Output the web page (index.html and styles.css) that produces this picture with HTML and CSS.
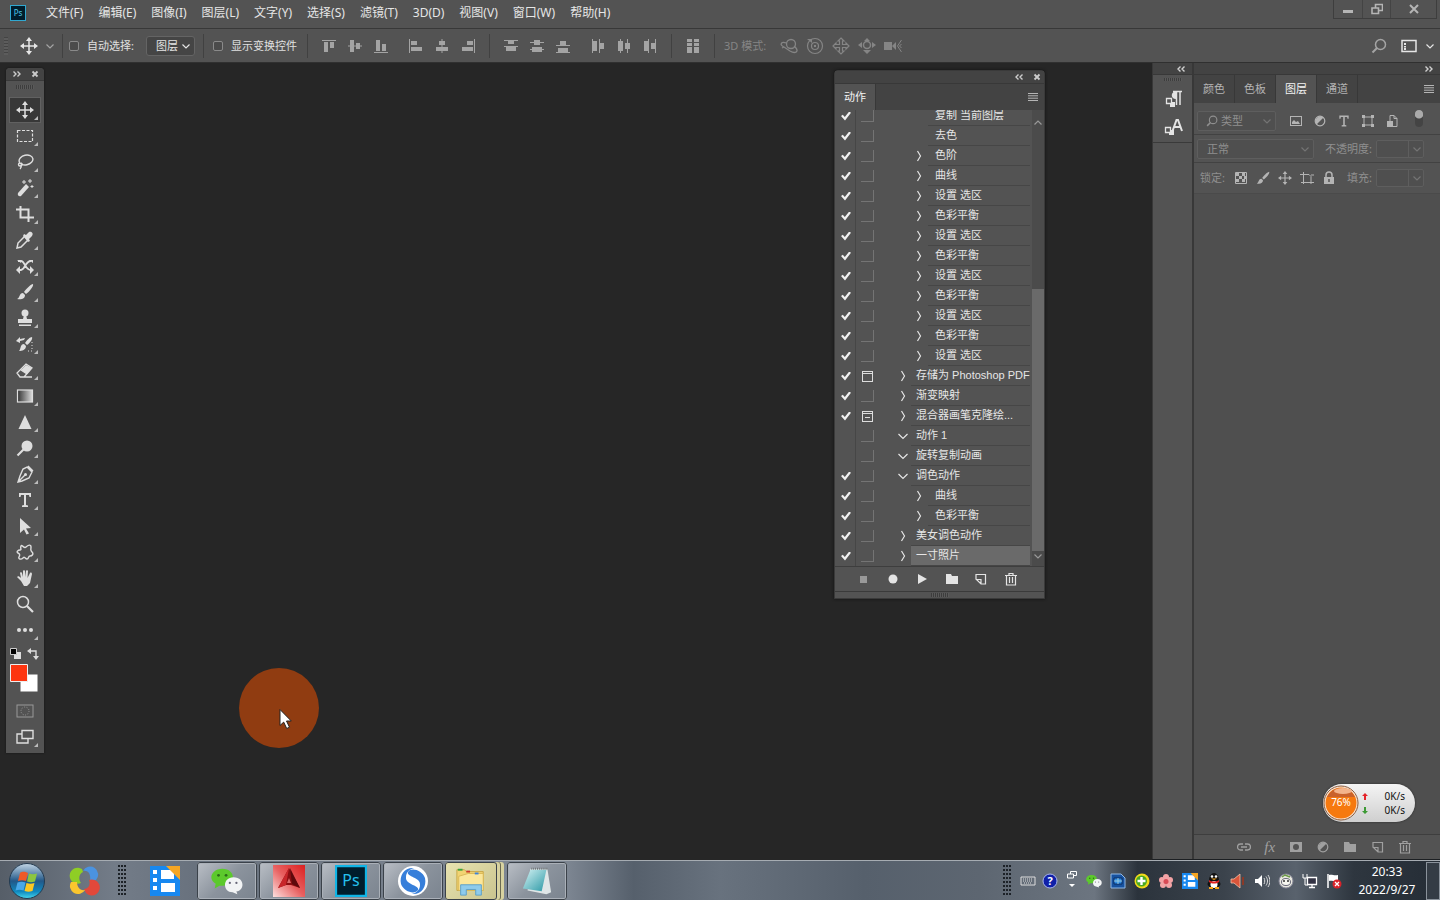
FILE: index.html
```html
<!DOCTYPE html>
<html lang="zh-CN">
<head>
<meta charset="utf-8">
<meta name="viewport" content="width=device-width, initial-scale=1">
<title>Photoshop</title>
<link rel="stylesheet" href="styles.css">
</head>
<body>
<svg class="defs" aria-hidden="true">
  <defs>
    <symbol id="move" viewBox="0 0 18 18"><path d="M9 2v14M2 9h14" stroke="currentColor" stroke-width="1.5"/><path d="M9 0l3 4H6zM9 18l3-4H6zM0 9l4-3v6zM18 9l-4-3v6z" fill="currentColor"/></symbol>
    <symbol id="down" viewBox="0 0 10 10"><path d="M1.500 3.500L5 7l3.500-3.500" fill="none" stroke="currentColor" stroke-width="1.200"/></symbol>
    <symbol id="up" viewBox="0 0 10 10"><path d="M1.500 6.500L5 3l3.500 3.500" fill="none" stroke="currentColor" stroke-width="1.200"/></symbol>
    <symbol id="right" viewBox="0 0 10 12"><path d="M3.500 1L6.500 6l-3 5" fill="none" stroke="currentColor" stroke-width="1.200"/></symbol>
    <symbol id="open" viewBox="0 0 10 12"><path d="M0.500 4L5 8.500 9.500 4" fill="none" stroke="currentColor" stroke-width="1.200"/></symbol>
    <symbol id="dbl-left" viewBox="0 0 8 6"><path d="M3.500 .5L1 3l2.500 2.500M7.500 .5L5 3l2.500 2.500" fill="none" stroke="currentColor" stroke-width="1.400"/></symbol>
    <symbol id="dbl-right" viewBox="0 0 8 6"><path d="M.5 .5L3 3 .5 5.500M4.500 .5L7 3 4.500 5.500" fill="none" stroke="currentColor" stroke-width="1.400"/></symbol>
    <symbol id="close" viewBox="0 0 8 8"><path d="M1.500 1.500l5 5M6.500 1.500l-5 5" stroke="currentColor" stroke-width="1.800"/></symbol>
    <symbol id="menu" viewBox="0 0 10 8"><path d="M0 .5h10M0 2.800h10M0 5.200h10M0 7.500h10" stroke="currentColor"/></symbol>
    <symbol id="search" viewBox="0 0 16 16"><circle cx="9.500" cy="6.500" r="5" fill="none" stroke="currentColor" stroke-width="1.500"/><path d="M6 10l-4.500 4.500" stroke="currentColor" stroke-width="2"/></symbol>
    <symbol id="al-top" viewBox="0 0 18 18"><path d="M2 3.500h14" stroke="currentColor"/><path d="M4 5h4v10H4zM10 5h4v6h-4z" fill="currentColor"/></symbol>
    <symbol id="al-mid" viewBox="0 0 18 18"><path d="M2 9h14" stroke="currentColor"/><path d="M4 3h4v12H4zM10 6h4v6h-4z" fill="currentColor"/></symbol>
    <symbol id="al-bot" viewBox="0 0 18 18"><path d="M2 15.500h14" stroke="currentColor"/><path d="M4 3h4v11H4zM10 7h4v7h-4z" fill="currentColor"/></symbol>
    <symbol id="al-left" viewBox="0 0 18 18"><path d="M2.500 2v14" stroke="currentColor"/><path d="M4 4h6v4H4zM4 10h11v4H4z" fill="currentColor"/></symbol>
    <symbol id="al-cen" viewBox="0 0 18 18"><path d="M9 2v14" stroke="currentColor"/><path d="M6 4h6v4H6zM3 10h12v4H3z" fill="currentColor"/></symbol>
    <symbol id="al-right" viewBox="0 0 18 18"><path d="M15.500 2v14" stroke="currentColor"/><path d="M8 4h6v4H8zM3 10h11v4H3z" fill="currentColor"/></symbol>
    <symbol id="ds-top" viewBox="0 0 18 18"><path d="M2 3.500h14M2 9.500h14" stroke="currentColor"/><path d="M6 4h6v3H6zM4 10h10v4H4z" fill="currentColor"/></symbol>
    <symbol id="ds-mid" viewBox="0 0 18 18"><path d="M2 5.500h14M2 12.500h14" stroke="currentColor"/><path d="M6 3h6v5H6zM4 10h10v5H4z" fill="currentColor"/></symbol>
    <symbol id="ds-bot" viewBox="0 0 18 18"><path d="M2 8.500h14M2 15.500h14" stroke="currentColor"/><path d="M6 4h6v4H6zM4 11h10v4H4z" fill="currentColor"/></symbol>
    <symbol id="grid3" viewBox="0 0 18 18"><path d="M3 2h5v3H3zM3 6h5v10H3zM10 2h5v3h-5zM10 6h5v10h-5z" fill="currentColor"/><path d="M3 9.500h12" stroke="#535353"/></symbol>
    <symbol id="orbit" viewBox="0 0 18 18"><g fill="none" stroke="currentColor" stroke-width="1.300"><circle cx="11" cy="7" r="4.500"/><path d="M6.500 6C1 4-1 8 4 10l6 4c5 3 9 1 6-3l-2-2M4 10l-2 1"/></g></symbol>
    <symbol id="roll" viewBox="0 0 18 18"><g fill="none" stroke="currentColor" stroke-width="1.200"><circle cx="9" cy="9" r="7.500"/><circle cx="9" cy="9" r="3.500"/></g><path d="M1 2h5v4zM8 8h2v2H8z" fill="currentColor"/></symbol>
    <symbol id="pan" viewBox="0 0 18 18"><path d="M9 1l3 3H10.500v3.500H14V6l3 3-3 3v-1.500h-3.500V14H12l-3 3-3-3h1.500v-3.500H4V12L1 9l3-3v1.500h3.500V4H6z" fill="none" stroke="currentColor" stroke-width="1.200"/></symbol>
    <symbol id="slide" viewBox="0 0 18 18"><circle cx="9" cy="8" r="3.500" fill="none" stroke="currentColor" stroke-width="1.500"/><path d="M9 1l3 3H6zM9 17l4-4H5zM0 8l4-3v6zM18 8l-4-3v6z" fill="currentColor"/></symbol>
    <symbol id="camera" viewBox="0 0 18 18"><path d="M0 5h8v8H0zM8 9l4-4v8z" fill="currentColor"/><path d="M17.500 3l-4 6 4 6M17.500 7l-2 2 2 2" fill="none" stroke="currentColor"/></symbol>
    <symbol id="marquee" viewBox="0 0 18 18"><rect x="1.500" y="3.500" width="15" height="11" fill="none" stroke="currentColor" stroke-width="1.200" stroke-dasharray="3 1.500"/></symbol>
    <symbol id="lasso" viewBox="0 0 18 18"><g fill="none" stroke="currentColor" stroke-width="1.400"><ellipse cx="10" cy="7" rx="7" ry="4.800" transform="rotate(-12 10 7)"/><path d="M4 10c-2 0-2 3 0 3s3-2 1-3M5 12c1 2 0 3-1 4"/></g></symbol>
    <symbol id="wand" viewBox="0 0 18 18"><path d="M10 5l3 3-8 9c-2 1-4-1-3-3z" fill="currentColor"/><path d="M8 1v4M6 3h4M14 0v4M12 2h4M16 6v3M14.500 7.500h3" stroke="currentColor"/></symbol>
    <symbol id="crop" viewBox="0 0 18 18"><path d="M0 4.500h12.500V17M4.500 1v11.500H18" fill="none" stroke="currentColor" stroke-width="2"/></symbol>
    <symbol id="dropper" viewBox="0 0 18 18"><path d="M9 5L2 12l-1 5 4-1 7-7" fill="none" stroke="currentColor" stroke-width="1.500"/><path d="M8 3l2 1 3-3c2-1 5 1 3 4l-3 3 1 2-2 1-5-6z" fill="currentColor"/></symbol>
    <symbol id="shuffle" viewBox="0 0 18 18"><path d="M2 4h3c4 0 4 9 10 9M2 13h3c4 0 4-9 10-9" fill="none" stroke="currentColor" stroke-width="1.800"/><path d="M18 13l-4-4v8zM0 13l4-4v8zM13 3h4v3zM1 3h4v3z" fill="currentColor"/></symbol>
    <symbol id="brush" viewBox="0 0 18 18"><path d="M17 1c1 2-4 8-7 10L8 9c2-3 7-8 9-8zM7 10l2 2c0 4-4 5-8 4 3-1 2-6 6-6z" fill="currentColor"/></symbol>
    <symbol id="stamp" viewBox="0 0 18 18"><circle cx="9" cy="4" r="3.500" fill="currentColor"/><path d="M8 6h2l1 4h5v4H2v-4h5zM3 15.500h12V17H3z" fill="currentColor"/></symbol>
    <symbol id="history" viewBox="0 0 18 18"><path d="M16 2c1 2-2 6-5 8L9 8c2-3 5-6 7-6zM8 9l2 2c0 4-4 5-7 5 2-2 1-7 5-7zM0 6l4-4v2l5-1-1 2-4 1v2z" fill="currentColor"/><path d="M16 7v9h-6" fill="none" stroke="currentColor" stroke-dasharray="1 2"/></symbol>
    <symbol id="eraser" viewBox="0 0 18 18"><path d="M10 4l6 3-5 6-6-4z" fill="currentColor"/><path d="M10 3l6 4-8 9H4l-3-4zM5 9l6 4M8 16h8" fill="none" stroke="currentColor" stroke-width="1.300"/></symbol>
    <symbol id="gradient" viewBox="0 0 18 18"><rect x="1.500" y="3" width="15" height="12" fill="url(#gr)" stroke="currentColor" stroke-width="1.200"/></symbol>
    <linearGradient id="gr"><stop stop-color="#333"/><stop offset="1" stop-color="#ddd"/></linearGradient>
    <symbol id="sharpen" viewBox="0 0 18 18"><path d="M9 2l6.500 14h-13z" fill="currentColor"/></symbol>
    <symbol id="dodge" viewBox="0 0 18 18"><circle cx="11" cy="7" r="5.500" fill="currentColor"/><path d="M7.500 10.500l-6 6" stroke="currentColor" stroke-width="2.200"/></symbol>
    <symbol id="pen" viewBox="0 0 18 18"><path d="M11 2l5 5-3 6-7 3-4 1 2-6 3-7zM3 16l6-6M12 1l5 5" fill="none" stroke="currentColor" stroke-width="1.400"/><circle cx="9.500" cy="9.500" r="1.500" fill="currentColor"/></symbol>
    <symbol id="type" viewBox="0 0 18 18"><path d="M3 2h12v4h-1.500L13 4h-3v10l2 .5V16H6v-1.500L8 14V4H5l-.5 2H3z" fill="currentColor"/></symbol>
    <symbol id="arrow" viewBox="0 0 18 18"><path d="M4 1l11 10-5 .5 3 5-2.500 1-2.500-5L4 16z" fill="currentColor"/></symbol>
    <symbol id="blob" viewBox="0 0 18 18"><path d="M5 3c1-2 3 3 5 1s5-3 5 0-1 3 1 5 0 4-2 4-1 3-3 3-2-3-4-1-5 1-4-1 1-3-1-4 0-3 2-3 0-2 1-4z" fill="none" stroke="currentColor" stroke-width="1.400"/></symbol>
    <symbol id="hand" viewBox="0 0 18 18"><path d="M5 12L1 8c1-1 2-1 4 1L4 4c0-1 2-1 2 0l1 4V2c0-1 2-1 2 0v6l1-6c0-1 2-1 2 0l-.5 7L14 4c1-1 2 0 2 1l-2 9-3 3H8z" fill="currentColor"/></symbol>
    <symbol id="zoom" viewBox="0 0 18 18"><circle cx="7" cy="7" r="5.500" fill="none" stroke="currentColor" stroke-width="1.500"/><path d="M11 11l6 6" stroke="currentColor" stroke-width="2.200"/></symbol>
    <symbol id="dots" viewBox="0 0 18 18"><circle cx="3" cy="9" r="2" fill="currentColor"/><circle cx="9" cy="9" r="2" fill="currentColor"/><circle cx="15" cy="9" r="2" fill="currentColor"/></symbol>
    <symbol id="mask" viewBox="0 0 18 18"><rect x="1" y="3" width="16" height="12" fill="none" stroke="currentColor"/><circle cx="9" cy="9" r="4" fill="none" stroke="currentColor" stroke-dasharray="1 1.500"/></symbol>
    <symbol id="screens" viewBox="0 0 18 18"><path d="M6 2.500h11v8H6zM6 6H1v9h11v-4.500" fill="none" stroke="currentColor" stroke-width="1.400"/></symbol>
    <symbol id="picture" viewBox="0 0 14 14"><rect x="1.500" y="2.500" width="11" height="9" fill="none" stroke="currentColor"/><path d="M3 10V8l2-2 2 2 2-1 2 3z" fill="currentColor"/></symbol>
    <symbol id="adjust" viewBox="0 0 14 14"><circle cx="7" cy="7" r="4.800" fill="none" stroke="currentColor" stroke-width="1.200"/><path d="M3.500 10.500l7-7a5 5 0 0 0-7 7z" fill="currentColor"/></symbol>
    <symbol id="shape" viewBox="0 0 14 14"><path d="M3 3h8v8H3z" fill="none" stroke="currentColor"/><path d="M1 1h3v3H1zM10 1h3v3h-3zM1 10h3v3H1zM10 10h3v3h-3z" fill="currentColor"/></symbol>
    <symbol id="smart" viewBox="0 0 14 14"><path d="M5 7V1.500h4l3 3v8H8M9 1.500v3h3" fill="none" stroke="currentColor"/><path d="M2 7h6v6H2z" fill="currentColor"/></symbol>
    <symbol id="checker" viewBox="0 0 14 14"><path d="M1.500 1.500h11v11h-11z" fill="none" stroke="currentColor"/><path d="M2 2h3v3H2zM8 2h3v3H8zM5 5h3v3H5zM10 5h2v3h-2zM2 8h3v3H2zM8 8h3v3H8z" fill="currentColor"/></symbol>
    <symbol id="artboard" viewBox="0 0 14 14"><path d="M3.500 1v12M0 3.500h9l2 2V13M1 11.500h13M11 4h3" fill="none" stroke="currentColor"/></symbol>
    <symbol id="lock" viewBox="0 0 14 14"><path d="M4 6V4a3 3 0 0 1 6 0v2" fill="none" stroke="currentColor" stroke-width="1.500"/><path d="M2 6h10v7H2z" fill="currentColor"/><path d="M7 8v3" stroke="#535353" stroke-width="1.500"/></symbol>
    <symbol id="link" viewBox="0 0 14 14"><path d="M6 10H3.500a3 3 0 0 1 0-6H6M8 4h2.500a3 3 0 0 1 0 6H8M4 7h6" fill="none" stroke="currentColor" stroke-width="1.300"/></symbol>
    <symbol id="maskadd" viewBox="0 0 14 14"><path fill-rule="evenodd" d="M1 2h12v10H1zM7 4a3 3 0 1 0 0 6 3 3 0 0 0 0-6z" fill="currentColor"/></symbol>
    <symbol id="folder" viewBox="0 0 14 14"><path d="M1 2h5l1 2h6v8H1z" fill="currentColor"/></symbol>
    <symbol id="newitem" viewBox="0 0 14 14"><path d="M2 7V2.500h9.500v9.500H7L2.500 7.500H7V12" fill="none" stroke="currentColor" stroke-width="1.200"/></symbol>
    <symbol id="trash" viewBox="0 0 14 14"><path d="M1 3.500h12M5 3V1.500h4V3M2.500 4v9h9V4M5.500 5v6M8.500 5v6" fill="none" stroke="currentColor" stroke-width="1.200"/></symbol>
    <symbol id="para" viewBox="0 0 20 20"><path d="M17 3v13M13.500 3v13M10 2.500h9" stroke="currentColor" stroke-width="1.500"/><path d="M14 2v8c-7 1-7-8 0-8z" fill="currentColor"/><path d="M3.500 9.500h5v5h-5z" fill="none" stroke="currentColor" stroke-width="1.300"/><path d="M8 13h4v5H7v-3h1z" fill="currentColor"/></symbol>
    <symbol id="char" viewBox="0 0 20 20"><path d="M9.500 14l4-11h1.500l4 11M11 10h6.500" fill="none" stroke="currentColor" stroke-width="2"/><path d="M2.500 10.500h5v5h-5z" fill="none" stroke="currentColor" stroke-width="1.300"/><path d="M7 13h4v5H6v-3h1z" fill="currentColor"/></symbol>
    <symbol id="wechat" viewBox="0 0 34 30"><path d="M12 2c15 0 15 18 0 18l-3 0-5 3 1-5C-4 13 1 2 12 2z" fill="#5cc92c"/><path d="M24 11c12 0 12 14 3 15l1 3-5-2c-11 0-11-16 1-16z" fill="#f2f4f5"/><g fill="#2c6b18"><circle cx="8" cy="9" r="1.500"/><circle cx="16" cy="9" r="1.500"/></g><g fill="#667"><circle cx="20" cy="17" r="1.200"/><circle cx="27" cy="17" r="1.200"/></g></symbol>
    <symbol id="bluebox" viewBox="0 0 30 30"><path d="M0 0h30v30H0z" fill="#1788f0"/><path d="M3 4h4v4H3zM3 12h4v4H3zM3 20h4v4H3zM11 4h13v9H11zM11 17h14v9H11z" fill="#fff"/><path d="M16 0h14v14z" fill="#f6a623"/></symbol>
    <linearGradient id="sky" x2="0" y2="1"><stop stop-color="#c2d5e5"/><stop offset=".5" stop-color="#225888"/><stop offset=".8" stop-color="#1089bf"/><stop offset="1" stop-color="#46d7ed"/></linearGradient>
    <linearGradient id="acad" x1="1" y1="0" x2="0" y2="1"><stop stop-color="#dc2020"/><stop offset=".5" stop-color="#e86060"/><stop offset="1" stop-color="#fde0df"/></linearGradient>
    <linearGradient id="note" x2="1" y2="1"><stop stop-color="#d5f3f4"/><stop offset="1" stop-color="#2b98a5"/></linearGradient>
  </defs>
</svg>

<header class="menubar">
  <svg class="ps-logo" viewBox="0 0 16 16" role="img" aria-label="Ps"><rect x=".5" y=".5" width="15" height="15" fill="#001d2c" stroke="#31a8d0"/><text x="8" y="11" text-anchor="middle" font-size="8" fill="#4fc8ea">Ps</text></svg>
  <nav class="menus">
    <button>文件(F)</button><button>编辑(E)</button><button>图像(I)</button><button>图层(L)</button><button>文字(Y)</button><button>选择(S)</button><button>滤镜(T)</button><button>3D(D)</button><button>视图(V)</button><button>窗口(W)</button><button>帮助(H)</button>
  </nav>
  <div class="winbtns">
    <button aria-label="最小化"><svg viewBox="0 0 12 12"><path d="M1 7h10v3H1z" fill="currentColor"/></svg></button>
    <button aria-label="还原"><svg viewBox="0 0 12 12"><path d="M4.500 5V1.500h7v6H8M1 5h6.500v5.500H1z" fill="none" stroke="currentColor" stroke-width="1.600"/></svg></button>
    <button class="wide" aria-label="关闭"><svg viewBox="0 0 12 12"><path d="M2 2l8 8M10 2l-8 8" stroke="currentColor" stroke-width="2"/></svg></button>
  </div>
</header>

<section class="options">
  <div class="opt first"><span class="vgrip"></span><svg class="i18 bright"><use href="#move"/></svg><svg class="i10"><use href="#down"/></svg></div>
  <div class="opt choose"><label><input type="checkbox">自动选择:</label>
    <span class="select auto"><select aria-label="自动选择"><option>图层</option></select><svg class="i10"><use href="#down"/></svg></span></div>
  <div class="opt show"><label><input type="checkbox">显示变换控件</label></div>
  <div class="opt icons"><div class="trio"><button aria-label="顶对齐"><svg class="i18"><use href="#al-top"/></svg></button><button aria-label="垂直居中对齐"><svg class="i18"><use href="#al-mid"/></svg></button><button aria-label="底对齐"><svg class="i18"><use href="#al-bot"/></svg></button></div><div class="trio"><button aria-label="左对齐"><svg class="i18"><use href="#al-left"/></svg></button><button aria-label="水平居中对齐"><svg class="i18"><use href="#al-cen"/></svg></button><button aria-label="右对齐"><svg class="i18"><use href="#al-right"/></svg></button></div></div>
  <div class="opt icons"><div class="trio"><button aria-label="按顶分布"><svg class="i18"><use href="#ds-top"/></svg></button><button aria-label="垂直居中分布"><svg class="i18"><use href="#ds-mid"/></svg></button><button aria-label="按底分布"><svg class="i18"><use href="#ds-bot"/></svg></button></div><div class="trio"><button aria-label="按左分布"><svg class="i18" viewBox="0 0 18 18"><path d="M3.500 2v14M10.500 2v14" stroke="currentColor"/><path d="M4 4h4v10H4zM11 6h4v6h-4z" fill="currentColor"/></svg></button><button aria-label="水平居中分布"><svg class="i18" viewBox="0 0 18 18"><path d="M5.500 2v14M12.500 2v14" stroke="currentColor"/><path d="M3 4h5v10H3zM10 6h5v6h-5z" fill="currentColor"/></svg></button><button aria-label="按右分布"><svg class="i18" viewBox="0 0 18 18"><path d="M7.500 2v14M14.500 2v14" stroke="currentColor"/><path d="M3 4h4v10H3zM10 6h4v6h-4z" fill="currentColor"/></svg></button></div></div>
  <div class="opt icons"><button aria-label="自动对齐图层"><svg class="i18"><use href="#grid3"/></svg></button></div>
  <div class="opt mode"><span>3D 模式:</span><div class="trio"><button aria-label="环绕"><svg class="i18"><use href="#orbit"/></svg></button><button aria-label="滚动"><svg class="i18"><use href="#roll"/></svg></button><button aria-label="平移"><svg class="i18"><use href="#pan"/></svg></button><button aria-label="滑动"><svg class="i18"><use href="#slide"/></svg></button><button aria-label="变焦"><svg class="i18"><use href="#camera"/></svg></button></div></div>
  <div class="opt-end"><button aria-label="搜索"><svg class="i16"><use href="#search"/></svg></button><button class="bright" aria-label="工作区"><svg class="i16" viewBox="0 0 16 14"><path d="M1 1.500h14v11H1z" fill="none" stroke="currentColor" stroke-width="1.500"/><path d="M3 4h2v2H3zM3 7h2v1.500H3zM3 9h2v2H3z" fill="currentColor"/></svg><svg class="i10"><use href="#down"/></svg></button></div>
</section>

<main class="workspace">
  <div class="canvas">
    <aside class="toolbox">
      <div class="tb-head"><svg class="dbl"><use href="#dbl-right"/></svg><svg class="x8"><use href="#close"/></svg></div>
      <span class="hgrip"></span>
      <div class="tools">
        <button class="on" aria-label="移动"><svg class="i18"><use href="#move"/></svg></button>
        <button aria-label="选框"><svg class="i18"><use href="#marquee"/></svg></button>
        <button aria-label="套索"><svg class="i18"><use href="#lasso"/></svg></button>
        <button aria-label="魔棒"><svg class="i18"><use href="#wand"/></svg></button>
        <button aria-label="裁剪"><svg class="i18"><use href="#crop"/></svg></button>
        <button aria-label="吸管"><svg class="i18"><use href="#dropper"/></svg></button>
        <button aria-label="内容感知移动"><svg class="i18"><use href="#shuffle"/></svg></button>
        <button aria-label="画笔"><svg class="i18"><use href="#brush"/></svg></button>
        <button aria-label="仿制图章"><svg class="i18"><use href="#stamp"/></svg></button>
        <button aria-label="历史记录画笔"><svg class="i18"><use href="#history"/></svg></button>
        <button aria-label="橡皮擦"><svg class="i18"><use href="#eraser"/></svg></button>
        <button aria-label="渐变"><svg class="i18"><use href="#gradient"/></svg></button>
        <button aria-label="锐化"><svg class="i18"><use href="#sharpen"/></svg></button>
        <button aria-label="减淡"><svg class="i18"><use href="#dodge"/></svg></button>
        <button aria-label="钢笔"><svg class="i18"><use href="#pen"/></svg></button>
        <button aria-label="文字"><svg class="i18"><use href="#type"/></svg></button>
        <button aria-label="路径选择"><svg class="i18"><use href="#arrow"/></svg></button>
        <button aria-label="自定形状"><svg class="i18"><use href="#blob"/></svg></button>
        <button aria-label="抓手"><svg class="i18"><use href="#hand"/></svg></button>
        <button class="plain" aria-label="缩放"><svg class="i18"><use href="#zoom"/></svg></button>
        <button aria-label="更多"><svg class="i18"><use href="#dots"/></svg></button>
      </div>
      <svg class="colors" viewBox="0 0 32 46"><path d="M5 5h7v7H5z" fill="#ddd"/><path d="M1.500 1.500h6v6h-6z" fill="#000" stroke="#ccc"/><path d="M21 4h6v6" fill="none" stroke="#ddd" stroke-width="1.400"/><path d="M22 1v6l-4-3zM24 9h6l-3 4z" fill="#ddd"/><path d="M11 27h18v18H11z" fill="#fff" stroke="#555"/><path d="M1.500 17.500h17v17h-17z" fill="#fd3510" stroke="#eee"/></svg>
      <div class="tools modes"><button class="plain dim" aria-label="快速蒙版"><svg class="i18"><use href="#mask"/></svg></button><button aria-label="屏幕模式"><svg class="i18"><use href="#screens"/></svg></button></div>
    </aside>

    <svg class="pointer" viewBox="0 0 80 80"><circle cx="40" cy="40" r="40" fill="#903c11"/><path d="M41 41.500v16l3.700-3.400 3 6.400 2.800-1.300-3-6.200h4.800z" fill="#fff" stroke="#222"/></svg>

    <section class="actions">
      <div class="ac-head"><svg class="dbl"><use href="#dbl-left"/></svg><svg class="x8"><use href="#close"/></svg></div>
      <div class="ac-tabs"><button class="tab on">动作</button><button class="pmenu" aria-label="面板菜单"><svg class="mi"><use href="#menu"/></svg></button></div>
      <div class="ac-body">
        <ul class="list">
          <li class="in"><input type="checkbox" checked aria-label="复制 当前图层"><i class="dlg"></i><i class="tw"></i><span>复制 当前图层</span></li>
          <li class="in"><input type="checkbox" checked aria-label="去色"><i class="dlg"></i><i class="tw"></i><span>去色</span></li>
          <li class="in"><input type="checkbox" checked aria-label="色阶"><i class="dlg"></i><button class="tw" aria-label="展开"><svg><use href="#right"/></svg></button><span>色阶</span></li>
          <li class="in"><input type="checkbox" checked aria-label="曲线"><i class="dlg"></i><button class="tw" aria-label="展开"><svg><use href="#right"/></svg></button><span>曲线</span></li>
          <li class="in"><input type="checkbox" checked aria-label="设置 选区"><i class="dlg"></i><button class="tw" aria-label="展开"><svg><use href="#right"/></svg></button><span>设置 选区</span></li>
          <li class="in"><input type="checkbox" checked aria-label="色彩平衡"><i class="dlg"></i><button class="tw" aria-label="展开"><svg><use href="#right"/></svg></button><span>色彩平衡</span></li>
          <li class="in"><input type="checkbox" checked aria-label="设置 选区"><i class="dlg"></i><button class="tw" aria-label="展开"><svg><use href="#right"/></svg></button><span>设置 选区</span></li>
          <li class="in"><input type="checkbox" checked aria-label="色彩平衡"><i class="dlg"></i><button class="tw" aria-label="展开"><svg><use href="#right"/></svg></button><span>色彩平衡</span></li>
          <li class="in"><input type="checkbox" checked aria-label="设置 选区"><i class="dlg"></i><button class="tw" aria-label="展开"><svg><use href="#right"/></svg></button><span>设置 选区</span></li>
          <li class="in"><input type="checkbox" checked aria-label="色彩平衡"><i class="dlg"></i><button class="tw" aria-label="展开"><svg><use href="#right"/></svg></button><span>色彩平衡</span></li>
          <li class="in"><input type="checkbox" checked aria-label="设置 选区"><i class="dlg"></i><button class="tw" aria-label="展开"><svg><use href="#right"/></svg></button><span>设置 选区</span></li>
          <li class="in"><input type="checkbox" checked aria-label="色彩平衡"><i class="dlg"></i><button class="tw" aria-label="展开"><svg><use href="#right"/></svg></button><span>色彩平衡</span></li>
          <li class="in"><input type="checkbox" checked aria-label="设置 选区"><i class="dlg"></i><button class="tw" aria-label="展开"><svg><use href="#right"/></svg></button><span>设置 选区</span></li>
          <li><input type="checkbox" checked aria-label="存储为 Photoshop PDF"><i class="dlg win"></i><button class="tw" aria-label="展开"><svg><use href="#right"/></svg></button><span>存储为 Photoshop PDF</span></li>
          <li><input type="checkbox" checked aria-label="渐变映射"><i class="dlg"></i><button class="tw" aria-label="展开"><svg><use href="#right"/></svg></button><span>渐变映射</span></li>
          <li><input type="checkbox" checked aria-label="混合器画笔克隆绘"><i class="dlg win some"></i><button class="tw" aria-label="展开"><svg><use href="#right"/></svg></button><span>混合器画笔克隆绘...</span></li>
          <li><input type="checkbox" aria-label="动作 1"><i class="dlg"></i><button class="tw" aria-label="折叠"><svg><use href="#open"/></svg></button><span>动作 1</span></li>
          <li><input type="checkbox" aria-label="旋转复制动画"><i class="dlg"></i><button class="tw" aria-label="折叠"><svg><use href="#open"/></svg></button><span>旋转复制动画</span></li>
          <li><input type="checkbox" checked aria-label="调色动作"><i class="dlg"></i><button class="tw" aria-label="折叠"><svg><use href="#open"/></svg></button><span>调色动作</span></li>
          <li class="in"><input type="checkbox" checked aria-label="曲线"><i class="dlg"></i><button class="tw" aria-label="展开"><svg><use href="#right"/></svg></button><span>曲线</span></li>
          <li class="in"><input type="checkbox" checked aria-label="色彩平衡"><i class="dlg"></i><button class="tw" aria-label="展开"><svg><use href="#right"/></svg></button><span>色彩平衡</span></li>
          <li><input type="checkbox" checked aria-label="美女调色动作"><i class="dlg"></i><button class="tw" aria-label="展开"><svg><use href="#right"/></svg></button><span>美女调色动作</span></li>
          <li class="sel"><input type="checkbox" checked aria-label="一寸照片"><i class="dlg"></i><button class="tw" aria-label="展开"><svg><use href="#right"/></svg></button><span>一寸照片</span></li>
        </ul>
        <div class="scroll"><svg class="i10"><use href="#up"/></svg><div class="track"><div class="thumb"></div></div><svg class="i10"><use href="#down"/></svg></div>
      </div>
      <div class="ac-foot">
        <button class="dim" aria-label="停止"><svg class="i14" viewBox="0 0 14 14"><path d="M4 4h7v7H4z" fill="currentColor"/></svg></button>
        <button aria-label="录制"><svg class="i14" viewBox="0 0 14 14"><circle cx="7" cy="7" r="4.500" fill="currentColor"/></svg></button>
        <button aria-label="播放"><svg class="i14" viewBox="0 0 14 14"><path d="M3 2l9 5-9 5z" fill="currentColor"/></svg></button>
        <button aria-label="新建组"><svg class="i14"><use href="#folder"/></svg></button>
        <button aria-label="新建动作"><svg class="i14"><use href="#newitem"/></svg></button>
        <button aria-label="删除"><svg class="i14"><use href="#trash"/></svg></button>
      </div>
      <div class="ac-grip"><span class="hgrip"></span></div>
    </section>
  </div>

  <aside class="dock slim">
    <div class="dock-head"><svg class="dbl"><use href="#dbl-left"/></svg></div>
    <div class="slim-group"><span class="hgrip"></span><button aria-label="段落"><svg class="i20"><use href="#para"/></svg></button><button aria-label="字符"><svg class="i20"><use href="#char"/></svg></button></div>
  </aside>

  <aside class="dock panels">
    <div class="dock-head"><svg class="dbl"><use href="#dbl-right"/></svg></div>
    <div class="tabs"><button class="tab">颜色</button><button class="tab">色板</button><button class="tab on">图层</button><button class="tab">通道</button><button class="pmenu" aria-label="面板菜单"><svg class="mi"><use href="#menu"/></svg></button></div>
    <div class="lrow filter">
      <div class="box kind"><svg class="i12"><use href="#search"/></svg><span class="select"><select aria-label="类型" disabled><option>类型</option></select><svg class="i10"><use href="#down"/></svg></span></div>
      <div class="ficons"><svg class="i14"><use href="#picture"/></svg><svg class="i14"><use href="#adjust"/></svg><svg class="i14"><use href="#type"/></svg><svg class="i14"><use href="#shape"/></svg><svg class="i14"><use href="#smart"/></svg></div>
      <span class="toggle"></span>
    </div>
    <div class="lrow blend">
      <span class="box select mode-sel"><select aria-label="混合模式" disabled><option>正常</option></select><svg class="i10"><use href="#down"/></svg></span>
      <label for="opacity">不透明度:</label><span class="combo"><input id="opacity" disabled><svg class="i10"><use href="#down"/></svg></span>
    </div>
    <div class="lrow locks">
      <span>锁定:</span>
      <div class="ficons"><svg class="i14"><use href="#checker"/></svg><svg class="i14"><use href="#brush"/></svg><svg class="i14"><use href="#move"/></svg><svg class="i14"><use href="#artboard"/></svg><svg class="i14"><use href="#lock"/></svg></div>
      <label for="fill">填充:</label><span class="combo"><input id="fill" disabled><svg class="i10"><use href="#down"/></svg></span>
    </div>
    <div class="layers">
      <div class="meter">
        <svg class="ball" viewBox="0 0 36 36"><circle cx="18" cy="18" r="17" fill="#fbe9dc" stroke="#8a5a3a"/><circle cx="18" cy="18" r="15.500" fill="#f6790f"/><path d="M4 12a15.500 15.500 0 0 1 28 0z" fill="#c9622c"/><ellipse cx="20" cy="6" rx="9" ry="3" fill="#f3b48b"/><text x="18" y="21" text-anchor="middle" font-size="10" fill="#fff">76%</text></svg>
        <div class="rates"><svg viewBox="0 0 6 7"><path d="M3 0l3 3H4v4H2V3H0z" fill="#e5242a"/></svg><span>0K/s</span><svg viewBox="0 0 6 7"><path d="M3 7l3-3H4V0H2v4H0z" fill="#3c9a34"/></svg><span>0K/s</span></div>
      </div>
    </div>
    <div class="lfoot">
      <button aria-label="链接"><svg class="i14"><use href="#link"/></svg></button>
      <button class="fx" aria-label="图层样式">fx</button>
      <button aria-label="蒙版"><svg class="i14"><use href="#maskadd"/></svg></button>
      <button aria-label="调整"><svg class="i14"><use href="#adjust"/></svg></button>
      <button aria-label="新建组"><svg class="i14"><use href="#folder"/></svg></button>
      <button aria-label="新建图层"><svg class="i14"><use href="#newitem"/></svg></button>
      <button aria-label="删除"><svg class="i14"><use href="#trash"/></svg></button>
    </div>
  </aside>
</main>

<footer class="taskbar">
  <button class="start" aria-label="开始"><svg viewBox="0 0 36 36"><circle cx="18" cy="18" r="17.500" fill="url(#sky)" stroke="#243b50"/><path d="M11 10c3-2 5-1 8 0l-2 8c-3-1-5-1-8 0z" fill="#ef5a28"/><path d="M20 10.500c3 1 5 1 8 0l-2 8c-3 1-5 1-8 0z" fill="#8cc63f"/><path d="M8.500 19.500c3-1 5-1 8 0l-2 8c-3-1-5-1-8 0z" fill="#49a8e8"/><path d="M17.500 20c3 1 5 1 8 0l-2 8c-3 1-5 1-8 0z" fill="#fcc822"/></svg></button>
  <button class="quick" aria-label="浏览器"><svg viewBox="0 0 32 32"><path d="M14 4A8 8 0 1 0 13 18c-3-4-2-9 2-11z" fill="#8fce25"/><path d="M28 15A8 8 0 1 0 15 6c6-1 8 4 7 10z" fill="#4b93e0"/><path d="M18 28a8 8 0 1 0 3-13c2 5-1 9-5 9z" fill="#e2483a"/><path d="M3 17a8 8 0 1 0 14 8c-5 1-8-3-8-8z" fill="#fbc62e"/></svg></button>
  <span class="dotgrip"></span>
  <button class="quick blue" aria-label="应用"><svg viewBox="0 0 30 30"><use href="#bluebox"/></svg></button>
  <div class="apps">
    <button aria-label="微信"><svg viewBox="0 0 34 30"><use href="#wechat"/></svg></button>
    <button aria-label="AutoCAD"><svg viewBox="0 0 32 32"><path d="M0 0h32v32H0z" fill="url(#acad)"/><path d="M16 3l11 20-9-3h-5l-8 3z" fill="#8c0f12"/><path d="M16 3l-3 17-8 3z" fill="#c8262a"/><path d="M17 3l10 20-8-4z" fill="#5e090c"/><path d="M16 13l2 5h-4z" fill="#d96a6a"/></svg></button>
    <button aria-label="Photoshop"><svg viewBox="0 0 30 30"><path d="M1 1h28v28H1z" fill="#001d2c" stroke="#10b5e6" stroke-width="2"/><text x="15" y="20" text-anchor="middle" font-size="15" fill="#25c0ef">Ps</text></svg></button>
    <button aria-label="搜狗浏览器"><svg viewBox="0 0 32 32"><circle cx="16" cy="16" r="15" fill="#fff"/><path d="M17 3C8 2 2 10 4 19c3 8 14 11 17 6 2-5-13-5-12-13 0-5 4-8 8-9z" fill="#377fda"/><path d="M15 29c9 1 15-7 13-16C25 5 14 2 11 7c-2 5 13 5 12 13 0 5-4 8-8 9z" fill="#377fda"/></svg></button>
    <button class="stack" aria-label="资源管理器"><svg viewBox="0 0 34 32"><path d="M2 4h8l2 2h18v20H2z" fill="#f2d473" stroke="#c8a647"/><path d="M14 8h16v18H4V11z" fill="#fbe79b" stroke="#d9b855"/><path d="M3 3h5v2H3z" fill="#3aa33d"/><path d="M12 5h4v2h-4z" fill="#cc3a2b"/><path d="M21 7h4v2h-4z" fill="#3c82d8"/><path d="M6 20h22v11h-6v-6H12v6H6z" fill="#8ecbec" stroke="#5b9fc8"/></svg></button>
    <button class="after" aria-label="记事本"><svg viewBox="0 0 34 32"><path d="M10 3h18l4 25-5 2-20-4z" fill="#dfe6e7"/><path d="M10 4h17l-5 23L2 24z" fill="url(#note)"/><path d="M11 3h17" stroke="#6b6f72" stroke-width="2" stroke-dasharray="1 1"/></svg></button>
  </div>
  <div class="tray">
    <span class="dotgrip"></span>
    <svg viewBox="0 0 16 16"><path d="M1 4h14v8H1z" fill="none" stroke="#ddd"/><path d="M3 6h10M3 8h10M4 10h8" stroke="#ddd" stroke-dasharray="1 1"/></svg>
    <svg class="help" viewBox="0 0 16 16"><circle cx="8" cy="8" r="7" fill="#1020a8" stroke="#a9b4ea"/><text x="8" y="12" font-size="11" font-weight="bold" fill="#fff" text-anchor="middle">?</text></svg>
    <svg class="tiny" viewBox="0 0 16 20"><path d="M6.500 3V.5h6v4H10M3.500 3h6v4h-6z" fill="none" stroke="#fff"/><path d="M5 13h6l-3 3z" fill="#fff"/></svg>
    <svg viewBox="0 0 34 30"><use href="#wechat"/></svg>
    <svg viewBox="0 0 16 16"><path d="M1 1h10l4 4v10H1z" fill="#1652a0" stroke="#8fb8e6"/><path d="M4 5h8v6H4z" fill="#2f8be4" stroke="#0b2c60"/><path d="M4 8h8M8 5v6" stroke="#9cd"/></svg>
    <svg viewBox="0 0 16 16"><circle cx="8" cy="8" r="7.500" fill="#f1d91a"/><circle cx="7.500" cy="8" r="5.500" fill="#49a823"/><path d="M7.500 4v8M3.500 8h8" stroke="#fff" stroke-width="2.400"/></svg>
    <svg viewBox="0 0 16 16"><g fill="#f3a3a5"><circle cx="8" cy="4" r="3"/><circle cx="4" cy="7" r="3"/><circle cx="12" cy="7" r="3"/><circle cx="5" cy="12" r="3"/><circle cx="11" cy="12" r="3"/></g><circle cx="8" cy="8.500" r="2.500" fill="#d94a55"/></svg>
    <svg viewBox="0 0 30 30"><use href="#bluebox"/></svg>
    <svg viewBox="0 0 16 16"><ellipse cx="8" cy="8" rx="5" ry="8" fill="#111"/><ellipse cx="8" cy="11" rx="6.500" ry="4" fill="#111"/><ellipse cx="8" cy="11.500" rx="3.500" ry="3.500" fill="#fff"/><path d="M3 7c3 2 7 2 10 0v2c-3 2-7 2-10 0z" fill="#e01f1f"/><circle cx="6" cy="3.500" r="1.300" fill="#fff"/><circle cx="10" cy="3.500" r="1.300" fill="#fff"/><path d="M5 5.500h6l-3 1.500zM3 14h4v2H3zM9 14h4v2H9z" fill="#f8a51b"/></svg>
    <svg viewBox="0 0 16 16"><path d="M1 6h3l6-5v14l-6-5H1z" fill="#d9553a" stroke="#f2c1aa" stroke-width=".8"/><path d="M13 4v8" stroke="#8b3a28" stroke-width="2"/></svg>
    <svg viewBox="0 0 16 16"><path d="M1 6h3l4-4v12l-4-4H1z" fill="#fff"/><path d="M10 5c1 2 1 4 0 6M12 3.500c2 3 2 6 0 9M14 2c2.500 4 2.500 8 0 12" fill="none" stroke="#ddd"/></svg>
    <svg viewBox="0 0 16 16"><circle cx="8" cy="8" r="7" fill="#e8e8df" stroke="#889"/><ellipse cx="8" cy="9" rx="4.500" ry="3.500" fill="#f7f7f0" stroke="#667"/><circle cx="6" cy="8" r="1" fill="#333"/><circle cx="10" cy="8" r="1" fill="#333"/><path d="M4 4l3-2 5 2" fill="none" stroke="#6a9a45" stroke-width="1.500"/></svg>
    <svg viewBox="0 0 16 16"><path d="M5.500 4.500h9v7h-9zM7 14.500h6M10 12v2" fill="#334" stroke="#fff" stroke-width="1.300"/><path d="M1 1v4h4V1M3 5v7h3" fill="none" stroke="#fff"/></svg>
    <svg viewBox="0 0 16 16"><path d="M2 1v14" stroke="#fff" stroke-width="1.500"/><path d="M3 2c3-1 5 1 9 0v6c-4 1-6-1-9 0z" fill="#fff"/><circle cx="11" cy="11" r="4.500" fill="#d8232a"/><path d="M9 9l4 4M13 9l-4 4" stroke="#fff" stroke-width="1.300"/></svg>
    <time class="clock"><span>20:33</span><span>2022/9/27</span></time>
    <button class="desk" aria-label="显示桌面"></button>
  </div>
</footer>
</body>
</html>
```
FILE: styles.css
```css
* { box-sizing: border-box; }
body {
  margin: 0;
  height: 100vh;
  display: flex;
  flex-direction: column;
  overflow: hidden;
  background: #262626;
  color: #e6e6e6;
  font: 11px/16px "Noto Sans", "Noto Sans CJK SC", sans-serif;
}
button {
  display: flex;
  align-items: center;
  justify-content: center;
  margin: 0;
  padding: 0;
  border: 0;
  background: none;
  color: inherit;
  font: inherit;
}
svg { display: block; flex: none; }
.defs { position: absolute; width: 0; height: 0; }
.i10 { width: 10px; height: 10px; }
.i12 { width: 12px; height: 12px; }
.i14 { width: 14px; height: 14px; }
.i16 { width: 16px; height: 16px; }
.i18 { width: 18px; height: 18px; }
.i20 { width: 20px; height: 20px; }
.dbl { width: 8px; height: 6px; }
.x8 { width: 8px; height: 8px; }
.mi { width: 10px; height: 8px; }
.bright { color: #e6e6e6; }

/* menu bar */
.menubar {
  display: flex;
  align-items: center;
  height: 29px;
  flex: none;
  padding: 0 0 3px 10px;
  background: #535353;
  border-bottom: 1px solid #383838;
}
.ps-logo { width: 16px; height: 16px; }
.menus { display: flex; gap: 15px; margin-left: 20px; font-size: 12px; }
.winbtns {
  display: flex;
  align-self: flex-start;
  margin-left: auto;
  margin-right: 3px;
  border: solid #3e3e3e;
  border-width: 0 1px 1px;
  color: #b5b5b5;
}
.winbtns button { width: 28px; height: 18px; }
.winbtns button + button { border-left: 1px solid #444; }
.winbtns .wide { width: 46px; }
.winbtns svg { width: 12px; height: 12px; }

/* options bar */
.options {
  display: flex;
  align-items: center;
  height: 34px;
  flex: none;
  background: #535353;
  border-bottom: 1px solid #303030;
  color: #a4a4a4;
}
.opt { display: flex; align-items: center; height: 24px; border-right: 1px solid #414141; }
.opt label { display: flex; align-items: center; gap: 8px; color: #e0e0e0; }
.opt input {
  appearance: none;
  width: 10px;
  height: 10px;
  margin: 0;
  border: 1px solid #8a8a8a;
  border-radius: 2px;
  background: #4b4b4b;
}
.first { padding: 0 7px 0 4px; }
.first .i18 { margin: 0 7px 0 12px; }
.vgrip { width: 4px; height: 18px; background: repeating-linear-gradient(#444 0 1px, #5c5c5c 1px 3px); }
.choose { padding: 0 8px 0 6px; gap: 12px; }
.show { padding: 0 10px 0 9px; }
.icons { padding: 0 12px; gap: 17px; }
.trio { display: flex; gap: 8px; }
.mode { border: 0; padding-left: 9px; gap: 14px; color: #858585; }
.opt-end { display: flex; align-items: center; gap: 14px; margin-left: auto; padding-right: 5px; }
.opt-end .bright { gap: 8px; }
.select { display: grid; align-items: center; }
.select > * { grid-area: 1 / 1; }
.select > svg { justify-self: end; margin-right: 3px; pointer-events: none; }
.select select {
  appearance: none;
  width: 100%;
  height: 18px;
  margin: 0;
  padding: 0 0 0 9px;
  border: 0;
  background: none;
  color: inherit;
  font: inherit;
  opacity: 1;
}
.auto { width: 49px; border: 1px solid #646464; border-radius: 3px; background: #454545; color: #e6e6e6; }

/* work area */
.workspace { display: flex; flex: 1; min-height: 0; }
.canvas { position: relative; flex: 1; background: #262626; }
.hgrip { display: block; width: 18px; height: 4px; background: repeating-linear-gradient(90deg, #3d3d3d 0 1px, #5a5a5a 1px 2px); }

/* tools */
.toolbox {
  position: absolute;
  left: 6px;
  top: 5px;
  width: 38px;
  padding-bottom: 3px;
  display: flex;
  flex-direction: column;
  align-items: center;
  border-radius: 4px 4px 0 0;
  background: #535353;
  box-shadow: 0 0 2px #111;
  color: #dedede;
}
.tb-head { display: flex; align-items: center; justify-content: space-between; align-self: stretch; height: 13px; padding: 0 5px 0 7px; border-radius: 4px 4px 0 0; background: #434343; border-bottom: 1px solid #393939; color: #ccc; }
.toolbox > .hgrip { margin: 4px 0 8px; }
.tools { display: flex; flex-direction: column; }
.tools button { position: relative; width: 32px; height: 26px; }
.tools .on { background: #383838; box-shadow: inset 0 0 0 1px #616161; }
.tools button::after { content: ""; position: absolute; right: 3px; bottom: 3px; border: 2px solid; border-color: transparent #bbb #bbb transparent; }
.tools .plain::after { display: none; }
.dim { color: #999; }
.colors { width: 32px; height: 46px; margin: 4px 0 5px; }

.pointer { position: absolute; left: 239px; top: 605px; width: 80px; height: 80px; }

/* actions panel */
.actions {
  position: absolute;
  right: 107px;
  top: 7px;
  width: 211px;
  display: flex;
  flex-direction: column;
  border: 1px solid #3a3a3a;
  border-radius: 4px 4px 0 0;
  background: #535353;
  box-shadow: 0 0 3px #111;
}
.ac-head { display: flex; align-items: center; justify-content: flex-end; gap: 10px; height: 12px; padding-right: 3px; background: #434343; color: #ccc; }
.ac-tabs { display: flex; height: 27px; background: #434343; border-top: 1px solid #383838; }
.tab { width: 41px; border-right: 1px solid #383838; color: #b4b4b4; }
.tab.on { background: #535353; color: #f4f4f4; }
.pmenu { margin-left: auto; padding: 0 6px; color: #b5b5b5; }
.ac-body { display: flex; height: 456px; overflow: hidden; font-family: "Liberation Sans", "Noto Sans CJK SC", sans-serif; }
.list { display: flex; flex: 1; flex-direction: column; justify-content: flex-end; margin: 0; padding: 0; list-style: none; }
.list li { display: flex; align-items: center; flex: none; height: 20px; }
.list input { appearance: none; display: flex; align-items: center; justify-content: center; width: 21px; height: 20px; margin: 0; padding-left: 2px; border-right: 1px solid #464646; }
.list input:checked::before { content: ""; width: 10px; height: 9px; background: #f0f0f0; clip-path: polygon(0 50%, 18% 35%, 38% 62%, 82% 0, 100% 14%, 40% 100%); }
.dlg { width: 13px; height: 12px; margin: 0 20px 0 5px; border: solid #747474; border-width: 0 1px 1px 0; }
.dlg.win { width: 11px; height: 11px; margin: 0 21px 0 6px; border: 1px solid #ddd; background: linear-gradient(#ddd, #ddd) 0 1px / 9px 1px no-repeat; }
.dlg.some { background: linear-gradient(#ddd, #ddd) 0 1px / 9px 1px no-repeat, linear-gradient(#ddd, #ddd) 2px 5px / 5px 1px no-repeat; }
.tw { width: 17px; height: 20px; }
.in .tw { width: 15px; margin: 0 2px 0 17px; }
.tw svg { width: 10px; height: 12px; }
.list span { flex: 1; height: 20px; padding-left: 5px; border-bottom: 1px solid #464646; line-height: 19px; white-space: nowrap; }
.list .in span { padding-left: 7px; }
.list .sel span { background: #6a6a6a; }
.scroll { display: flex; flex-direction: column; align-items: center; width: 13px; margin: 0 3px 0 2px; padding: 8px 0 5px; background: #4b4b4b; color: #999; }
.track { display: flex; flex-direction: column; justify-content: flex-end; flex: 1; width: 12px; }
.thumb { height: 62%; background: #6a6a6a; }
.ac-foot { display: flex; justify-content: space-between; align-items: center; height: 25px; padding: 0 26px 0 21px; border-top: 1px solid #3e3e3e; color: #e4e4e4; }
.ac-grip { display: flex; justify-content: center; align-items: center; height: 7px; border-top: 1px solid #3a3a3a; }

/* docks */
.dock { display: flex; flex-direction: column; background: #535353; border-left: 1px solid #383838; }
.dock-head { display: flex; align-items: center; justify-content: flex-end; height: 12px; padding-right: 7px; background: #434343; border-bottom: 1px solid #383838; color: #d0d0d0; }
.slim { width: 40px; }
.slim-group { display: flex; flex-direction: column; align-items: center; gap: 8px; padding: 3px 0 5px; border-bottom: 1px solid #3a3a3a; color: #e4e4e4; }
.slim-group .hgrip { height: 3px; }
.panels { width: 248px; border-left-width: 2px; color: #8f8f8f; }
.tabs { display: flex; height: 28px; background: #434343; }
.lrow { display: flex; align-items: center; height: 28px; padding: 0 16px 0 6px; border-bottom: 1px solid #424242; }
.filter { height: 32px; padding-top: 4px; padding-left: 3px; }
.box, .combo { border: 1px solid #5e5e5e; border-radius: 2px; background: #4f4f4f; }
.box > svg.i10, .kind .i10, .combo .i10 { color: #747474; }
.kind { display: flex; align-items: center; width: 79px; height: 20px; padding-left: 8px; }
.kind .select { flex: 1; }
.kind select { padding-left: 3px; }
.ficons { display: flex; gap: 10px; color: #b4b4b4; }
.filter .ficons { margin-left: 13px; }
.toggle { width: 8px; height: 17px; margin: 0 1px 4px auto; border-radius: 4px; background: radial-gradient(circle at 4px 4px, #aaa 4px, #444 5px); }
.mode-sel { width: 117px; height: 20px; margin-left: -3px; }
.blend label { margin: 0 4px 0 auto; }
.combo { display: flex; align-items: center; width: 48px; height: 18px; }
.combo input { width: 32px; height: 16px; margin: 0 3px 0 0; padding: 0 2px; border: 0; border-right: 1px solid #5e5e5e; background: none; color: inherit; }
.locks { height: 30px; padding-bottom: 1px; border-bottom: 0; }
.locks .ficons { gap: 8px; margin-left: 9px; }
.locks label { margin: 0 4px 0 auto; }
.layers { position: relative; flex: 1; background: #4f4f4f; border-top: 1px solid #4a4a4a; }
.meter { position: absolute; right: 25px; bottom: 12px; display: flex; align-items: center; width: 92px; height: 38px; border-radius: 19px; background: linear-gradient(#f4f4f4, #cfcfcf); box-shadow: 0 0 2px #222; }
.ball { width: 36px; height: 36px; }
.rates { display: grid; flex: 1; grid-template-columns: 6px 1fr; align-items: center; padding: 0 10px 0 3px; color: #111; font-size: 10px; line-height: 14px; text-align: right; }
.rates svg { width: 6px; height: 7px; }
.lfoot { display: flex; align-items: center; justify-content: space-between; height: 26px; padding: 0 28px 2px 43px; border-top: 1px solid #3e3e3e; color: #a0a0a0; }
.fx { font: italic 15px/14px "Liberation Serif", serif; }

/* taskbar */
.taskbar {
  display: flex;
  align-items: center;
  flex: none;
  height: 40px;
  padding-left: 9px;
  border-top: 1px solid #a6acb2;
  box-shadow: 0 -1px 0 #1c1f22;
  background: linear-gradient(90deg, #565e68 0, #737c88 8%, #68717d 14%, #7a838f 30%, #808995 39%, #56606c 44%, #68727e 50%, #56606c 60%, #5d6671 68%, #6c7580 76%, #2b333c 79%, #3b434c 85%, #59626d 90%, #2e363f 94%, #252d36 100%);
}
.start svg { width: 36px; height: 36px; }
.quick { margin-left: 23px; }
.quick svg { width: 32px; height: 32px; }
.dotgrip { width: 8px; height: 31px; margin-left: 18px; background: radial-gradient(circle at 1px 1px, #1d2228 1px, transparent 1px) 0 0 / 3px 4px; }
.blue { margin-left: 24px; }
.blue svg { width: 30px; height: 30px; }
.apps { display: flex; gap: 2px; margin-left: 17px; }
.apps button { width: 60px; height: 38px; border: 1px solid #c3c8ce; border-radius: 3px; outline: 1px solid #3b424a; outline-offset: -1px; background: linear-gradient(135deg, #b9bec5, #8b939d 50%, #7b848f); box-shadow: inset 0 0 0 1px #aab0b8; }
.apps svg { width: 32px; height: 32px; }
.apps .stack { width: 52px; border-color: #f1eab8; background: linear-gradient(135deg, #e8e3b0, #c9c48f); box-shadow: 3px 0 0 #d7d2a0, 4px 0 0 #6b6b52, 7px 0 0 #d7d2a0; }
.apps .after { margin-left: 8px; }
.tray { display: flex; align-items: center; gap: 8px; height: 100%; margin-left: auto; }
.tray > svg { width: 16px; height: 16px; }
.tray > .dotgrip { margin: 0 1px 0 0; }
.tray > .help { margin-left: -2px; }
.tray > .tiny { height: 20px; margin: 0 -2px; }
.clock { display: flex; flex-direction: column; align-items: center; width: 68px; padding-left: 6px; color: #fff; font-size: 12px; line-height: 18px; }
.desk { width: 14px; height: 38px; border: 1px solid #8a929b; background: #343c45; }
```
